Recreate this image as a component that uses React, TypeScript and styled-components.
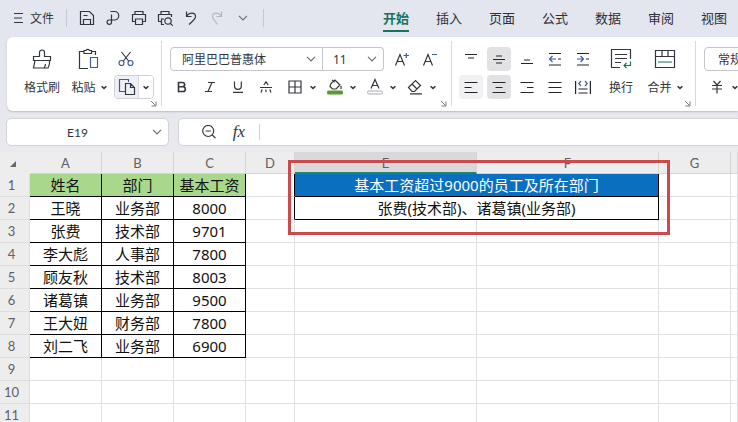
import React from "react";
import styled, { createGlobalStyle, css } from "styled-components";

const ink = "#33363d";
const blue = "#3f5c9a";
const green = "#17735c";

const GlobalStyle = createGlobalStyle`
  * { box-sizing: border-box; }
  body {
    margin: 0;
    font-family: "Noto Sans", "Noto Sans CJK SC", sans-serif;
    font-size: 12px;
    color: ${ink};
  }
  button, input, select { font: inherit; color: inherit; margin: 0; }
`;

const Window = styled.div`
  display: flex;
  flex-direction: column;
  height: 100vh;
  overflow: hidden;
  background: linear-gradient(#e3e5ef 0, #e4e6ef 60px, #e9e9ee 150px);
`;

const bare = css`
  border: 0;
  padding: 0;
  background: none;
  display: flex;
  align-items: center;
  justify-content: center;
`;

/* Menu bar */
const MenuBar = styled.header`
  display: flex;
  align-items: center;
  flex: none;
  height: 37px;
  padding: 0 11px 2px 14px;
`;
const FileButton = styled.button`
  ${bare}
  gap: 7px;
  margin-right: 12px;
  white-space: nowrap;
`;
const QuickButton = styled.button`
  ${bare}
  width: 26px;
  height: 26px;
  &:disabled { color: #b4b7c0; }
`;
const MenuRule = styled.span<{ $before?: number; $after?: number }>`
  width: 1px;
  height: 18px;
  margin: 0 ${(p) => p.$after ?? 0}px 0 ${(p) => p.$before ?? 0}px;
  background: #c6c9d3;
`;
const Tabs = styled.nav`
  display: flex;
  gap: 27px;
  margin-left: auto;
`;
const Tab = styled.a<{ $active?: boolean }>`
  font-size: 13px;
  line-height: 24px;
  white-space: nowrap;
  text-decoration: none;
  color: ${(p) => (p.$active ? green : "#2c2f36")};
  font-weight: ${(p) => (p.$active ? 700 : 400)};
  border-bottom: 2px solid ${(p) => (p.$active ? green : "transparent")};
  margin-top: 2px;
`;

/* Ribbon */
const Ribbon = styled.section`
  display: flex;
  flex: none;
  margin-left: 7px;
  padding: 4px 0 5px;
  overflow: hidden;
  background: #fff;
  border-radius: 6px 0 0 6px;
  box-shadow: 0 1px 2px #b9bac4;
`;
const Group = styled.div<{ $left: number; $right: number }>`
  position: relative;
  display: flex;
  flex: none;
  gap: 4px;
  padding: 6px ${(p) => p.$right}px 7px ${(p) => p.$left}px;
  border-right: 1px solid #d9dade;
`;
const Stack = styled.div`
  display: flex;
  flex-direction: column;
  gap: 4px;
`;
const Line = styled.div<{ $gap?: number }>`
  display: flex;
  align-items: center;
  height: 24px;
  gap: ${(p) => p.$gap ?? 0}px;
`;
const Pair = styled.div`
  display: flex;
`;
const BigButton = styled.button<{ $width: number }>`
  ${bare}
  flex-direction: column;
  gap: 4px;
  width: ${(p) => p.$width}px;
`;
const BigIcon = styled.span`
  display: flex;
  align-items: center;
  justify-content: center;
  height: 24px;
`;
const Caption = styled.span`
  display: flex;
  align-items: center;
  gap: 5px;
  height: 24px;
  white-space: nowrap;
`;
const Tool = styled.button<{ $width?: number; $tone?: string }>`
  ${bare}
  flex: none;
  width: ${(p) => p.$width ?? 24}px;
  height: 24px;
  border-radius: 4px;
  background: ${(p) => p.$tone ?? "none"};
`;
const Split = styled.div`
  display: flex;
  margin-right: 4px;
`;
const CopySplit = styled.div`
  display: flex;
  height: 24px;
  border: 1px solid #cfd1d6;
  border-radius: 4px;
  overflow: hidden;
`;
const CopyButton = styled.button<{ $width: number; $on?: boolean }>`
  ${bare}
  width: ${(p) => p.$width}px;
  background: ${(p) => (p.$on ? "#eef0f5" : "#fff")};
  border-right: ${(p) => (p.$on ? "1px solid #d9dbe0" : "0")};
`;
const Launcher = styled.button`
  ${bare}
  position: absolute;
  right: 3px;
  bottom: -2px;
  width: 9px;
  height: 9px;
`;
const PickerBox = styled.span<{ $width: number; $first?: boolean; $last?: boolean }>`
  display: flex;
  align-items: center;
  width: ${(p) => p.$width}px;
  height: 24px;
  padding-right: 6px;
  border: 1px solid #c4c6cc;
  border-left-width: ${(p) => (p.$first ? 1 : 0)}px;
  border-radius: ${(p) => (p.$first ? 4 : 0)}px ${(p) => (p.$last ? 4 : 0)}px ${(p) => (p.$last ? 4 : 0)}px ${(p) => (p.$first ? 4 : 0)}px;
`;
const Picker = styled.select<{ $indent: number }>`
  flex: 1;
  min-width: 0;
  height: 22px;
  padding: 0 0 0 ${(p) => p.$indent}px;
  border: 0;
  appearance: none;
  background: none;
`;

/* Formula row */
const FormulaRow = styled.div`
  display: flex;
  flex: none;
  gap: 9px;
  padding: 7px 0 6px 6px;
`;
const NameBox = styled.div`
  display: flex;
  align-items: center;
  width: 163px;
  height: 28px;
  padding-right: 6px;
  border: 1px solid #d2d3d9;
  border-radius: 5px;
  background: #fff;
`;
const NameInput = styled.input`
  flex: 1;
  min-width: 0;
  border: 0;
  padding: 0 4px 0 0;
  background: none;
  text-align: center;
  font-family: Lato, sans-serif;
  font-size: 12px;
`;
const FormulaBox = styled.div`
  display: flex;
  align-items: center;
  flex: 1;
  height: 28px;
  padding-left: 15px;
  border: 1px solid #d2d3d9;
  border-right: 0;
  border-radius: 5px 0 0 5px;
  background: #fff;
`;
const FormulaButton = styled.button`
  ${bare}
  width: 30px;
  height: 24px;
`;
const FxMark = styled.span`
  font: italic 17px/24px "Liberation Serif", serif;
`;
const FormulaInput = styled.input`
  flex: 1;
  min-width: 0;
  height: 16px;
  margin-left: 5px;
  border: 0;
  border-left: 1px solid #d0d1d6;
  background: none;
`;

/* Sheet */
const SheetArea = styled.main`
  position: relative;
  flex: none;
`;
const Sheet = styled.table`
  width: 100%;
  table-layout: fixed;
  border-collapse: separate;
  border-spacing: 0;
  background: #fff;
`;
const Col = styled.col<{ $width?: number }>`
  width: ${(p) => (p.$width ? `${p.$width}px` : "auto")};
`;
const headText = css`
  padding: 0;
  font-family: Lato, sans-serif;
  font-size: 13px;
  font-weight: 400;
  color: #606166;
`;
const ColHead = styled.th<{ $on?: boolean }>`
  ${headText}
  height: 22px;
  padding-top: ${(p) => (p.$on ? 2 : 1)}px;
  line-height: 18px;
  background: ${(p) => (p.$on ? "#d9d9dc" : "#ededee")};
  border-right: 1px solid #d6d6d8;
  border-bottom: ${(p) => (p.$on ? "2px solid #218567" : "1px solid #d6d6d8")};
`;
const Corner = styled.td`
  padding: 2px 0 0 9px;
  line-height: 0;
  background: #ededee;
`;
const RowHead = styled.th`
  ${headText}
  height: 23px;
  padding-right: 6px;
  background: #ededee;
  border-right: 1px solid #dededf;
  border-bottom: 1px solid #dededf;
`;
const fills = { plain: "#fff", head: "#a9d88c", title: "#0b6fc0" };
const Cell = styled.td<{ $boxed?: boolean; $edge?: boolean; $fill?: keyof typeof fills }>`
  height: 23px;
  padding: 0;
  overflow: hidden;
  text-align: center;
  white-space: nowrap;
  font-size: 15px;
  line-height: 22px;
  color: ${(p) => (p.$fill === "title" ? "#fff" : "#111")};
  background: ${(p) => fills[p.$fill ?? "plain"]};
  border-right: 1px solid ${(p) => (p.$boxed || p.$edge ? "#000" : "#e0e0e2")};
  border-bottom: 1px solid ${(p) => (p.$boxed ? "#000" : "#e0e0e2")};
`;
const Highlight = styled.div`
  position: absolute;
  left: 288px;
  top: 8px;
  width: 382px;
  height: 75px;
  border: 3px solid #cb4b4c;
  pointer-events: none;
`;

/* Icons */
const Svg = ({ w = 16, h = 16, children }: { w?: number; h?: number; children: React.ReactNode }) => (
  <svg width={w} height={h} viewBox={`0 0 ${w} ${h}`} fill="none" stroke="currentColor" strokeWidth="1.2" aria-hidden="true">
    {children}
  </svg>
);
const Chevron = () => (
  <Svg w={10} h={6}><path d="M1 .8 5 4.8 9 .8" stroke="#6d7077" /></Svg>
);
const SmallChevron = () => (
  <Svg w={6} h={5}><path d="M.6 1.2 3 3.4 5.4 1.2" strokeWidth="1.5" /></Svg>
);
const LauncherIcon = () => (
  <Svg w={7} h={7}><path d="M1 1 5.5 5.5M6 1.5V6H1.5" stroke="#777a80" strokeWidth="1" /></Svg>
);
const MenuIcon = () => (
  <Svg w={9} h={12}><path d="M0 1.5h9M0 6h8M0 10.5h9" /></Svg>
);
const SaveIcon = () => (
  <Svg><path d="M1.5 1.5h9l4 4v9h-13zM4.5 14.5V9.500h7v5M4.500 5.500h4" /></Svg>
);
const ExportIcon = () => (
  <Svg><path d="M5.500 1.500h4a4 4 0 0 1 0 8.500H4.200a2.200 2.200 0 1 0 2.300 2.200V4.500" /></Svg>
);
const PrintIcon = () => (
  <Svg><path d="M4 4.500v-3h8v3M4 11.500H1.500v-7h13v7H12M4.500 9h7v5.500h-7z" /></Svg>
);
const PreviewIcon = () => (
  <Svg><path d="M4 4.500v-3h8v3M4 11.500H1.500v-7h13V7M7 14.500H4.500V9H7" /><circle cx="11" cy="11" r="3.200" /><path d="m13.300 13.300 2.400 2.400" /></Svg>
);
const UndoIcon = () => (
  <Svg><path d="M3.500 1.500v5h5M3.500 6.500C6 2 12.500 2 12.500 6.500c0 3-3 4.500-6.500 8" /></Svg>
);
const RedoIcon = () => (
  <Svg><path d="M12.500 1.500v5h-5M12.500 6.500C10 2 3.500 2 3.500 6.500c0 3 3 4.500 5 8" /></Svg>
);
const BrushIcon = () => (
  <Svg w={20} h={22}><path d="M1.500 8.500h6V4.500a2.500 2.500 0 0 1 5 0v4h6v4h-17zM3 12.500 1.500 20h14.500c1.500-2.500 2-5 1.500-7.500M13.500 16c0 1.500-.5 3-1.500 4" /></Svg>
);
const PasteIcon = () => (
  <Svg w={22} h={22}><path d="M6 3.500H1.500v17H10M13 3.500h4.500V7M6 5.500v-3h2a2 2 0 0 1 3.500 0h2v3z" /><path d="M12.500 9.500h7v10h-7z" stroke={blue} /></Svg>
);
const CutIcon = () => (
  <Svg w={18} h={16}><path d="M4.500 1 12 10.500M13.500 1 6 10.500" /><circle cx="4.500" cy="12" r="2.500" stroke={blue} /><circle cx="13.500" cy="12" r="2.500" stroke={blue} /></Svg>
);
const CopyIcon = () => (
  <Svg w={18} h={18}><path d="M7 13.500H1.500v-12h9V4" stroke={blue} /><path d="M7.500 5.500h5l4 4v7h-9zM12.500 5.500v4h4" /></Svg>
);
const GrowIcon = () => (
  <Svg w={16} h={16}><path d="M1.500 14.500 6 3.500l4.500 11M3 10.500h6" /><path d="M9.500 4.500H15M12.300 2v5" stroke={blue} /></Svg>
);
const ShrinkIcon = () => (
  <Svg w={16} h={16}><path d="M1.500 14.500 6 3.500l4.500 11M3 10.500h6" /><path d="M10 3.500h5" stroke={blue} /></Svg>
);
const BoldIcon = () => (
  <Svg w={12} h={12}><path d="M2.500 1.500h4a2 2 0 0 1 0 4.300h-4zM2.500 5.800h4.500a2.300 2.300 0 0 1 0 4.700H2.500z" strokeWidth="1.600" /></Svg>
);
const ItalicIcon = () => (
  <Svg w={12} h={12}><path d="M4 1.500h7M1 10.500h7M8 1.500l-4 9" /></Svg>
);
const UnderlineIcon = () => (
  <Svg w={12} h={12}><path d="M2.500.5v4.500a3.300 3.300 0 0 0 6.800 0V.5M1 11.300h10" /></Svg>
);
const StrikeIcon = () => (
  <Svg w={14} h={12}><path d="M1 6.500h12M4.800 4 7 .8 9.200 4M3.200 8.500l-1.200 3M10.800 8.500l1.200 3M7 8.500V11" /></Svg>
);
const BorderIcon = () => (
  <Svg w={14} h={14}><path d="M1 1h12v12H1zM7 1v12M1 7h12" /></Svg>
);
const FillIcon = () => (
  <Svg w={16} h={18}><path d="M4 5.500 8 2l5 5-4 4H5.500L3 8.500zM5 2l3 2M14 8v3" /><rect x="0" y="12.500" width="16" height="4" rx="1.500" fill="#5b9b2d" stroke="none" /></Svg>
);
const FontColorIcon = () => (
  <Svg w={16} h={18}><path d="M4 10.500 8 1.500l4 9M5.500 7.500h5" /><rect x=".5" y="13" width="15" height="3" rx="1.500" stroke="#a9abb0" strokeWidth="1" /></Svg>
);
const EraserIcon = () => (
  <Svg w={16} h={16}><path d="M1.500 8.500 8.500 1.500l5 5-6 6H5zM5 5l5 5M3 14.800h12" /></Svg>
);
const Bars = ({ d, accent }: { d: string; accent?: string }) => (
  <Svg><path d={d} stroke="#22252b" />{accent && <path d={accent} stroke={blue} />}</Svg>
);
const WrapIcon = () => (
  <Svg w={22} h={22}><path d="M20.500 11V1.500h-19v18H10M5 6.500h12M5 10.500h12M5 14.500h6" /><path d="M20.500 13.500v4H14M16.500 15 14 17.500l2.500 2.500" stroke={green} /></Svg>
);
const MergeIcon = () => (
  <Svg w={22} h={20}><path d="M1.500 1.500h19v17h-19zM1.500 7.500h19M8 1.500v6M14 1.500v6" /><path d="M4 13h14" stroke={green} /></Svg>
);
const ZoomOutIcon = () => (
  <Svg w={16} h={16}><circle cx="7.200" cy="7" r="5.500" /><path d="M4.500 7h5.400M11.300 11l3.200 3.200" /></Svg>
);

const quick = [
  ["保存", SaveIcon], ["输出为PDF", ExportIcon], ["打印", PrintIcon], ["打印预览", PreviewIcon],
  ["撤销", UndoIcon], ["恢复", RedoIcon], ["更多", Chevron],
] as const;
const tabs = ["开始", "插入", "页面", "公式", "数据", "审阅", "视图"];
const styles = [["加粗", BoldIcon], ["倾斜", ItalicIcon], ["下划线", UnderlineIcon], ["删除线", StrikeIcon]] as const;
const splits = [["边框", BorderIcon], ["填充颜色", FillIcon], ["字体颜色", FontColorIcon], ["清除", EraserIcon]] as const;

type Align = { name: string; d: string; accent?: string; tone?: string };
const alignRows: Align[][] = [
  [
    { name: "顶端对齐", d: "M2 3.500h12M5 7h6" },
    { name: "垂直居中", d: "M5 5h6M2 8.500h12M5 12h6", tone: "#e2e2e4" },
    { name: "底端对齐", d: "M5 9h6M2 12.500h12" },
    { name: "减少缩进", d: "M2 2.500h12M2 14h12M11 8h3", accent: "M9 8H2.500M5.500 5l-3 3 3 3" },
    { name: "增加缩进", d: "M2 2.500h12M2 14h12M11 8h3", accent: "M2 8h6.500M5.500 5l3 3-3 3" },
  ],
  [
    { name: "左对齐", d: "M1.500 3.500h13M1.500 8.500h7M1.500 13.500h13", tone: "#f1f1f3" },
    { name: "水平居中", d: "M1.500 3.500h13M4.500 8.500h7M1.500 13.500h13", tone: "#e2e2e4" },
    { name: "右对齐", d: "M1.500 3.500h13M8 8.500h6.500M1.500 13.500h13" },
    { name: "两端对齐", d: "M1.500 3.500h13M1.500 8.500h13M1.500 13.500h13" },
    { name: "分散对齐", d: "M.6 2v13M15.400 2v13M3.500 10h9M3.500 14h9", accent: "M6 2 3.800 4.500 6 7M10 2l2.200 2.500L10 7" },
  ],
];

const rows = [
  ["姓名", "部门", "基本工资"], ["王晓", "业务部", "8000"], ["张费", "技术部", "9701"], ["李大彪", "人事部", "7800"],
  ["顾友秋", "技术部", "8003"], ["诸葛镇", "业务部", "9500"], ["王大妞", "财务部", "7800"], ["刘二飞", "业务部", "6900"],
  ["", "", ""], ["", "", ""], ["", "", ""],
];
const summary = ["基本工资超过9000的员工及所在部门", "张费(技术部)、诸葛镇(业务部)"];
const columns = ["A", "B", "C", "D", "E", "F", "G", ""];
const widths = [30, 72, 72, 72, 49, 182, 182, 72, undefined];

export default function App() {
  return (
    <Window>
      <GlobalStyle />
      <MenuBar>
        <FileButton><MenuIcon />文件</FileButton>
        <MenuRule $after={7} />
        {quick.map(([name, Icon]) => (
          <QuickButton key={name} aria-label={name} disabled={name === "恢复"}><Icon /></QuickButton>
        ))}
        <MenuRule $before={7} />
        <Tabs>
          {tabs.map((t, i) => <Tab key={t} href="#" $active={i === 0}>{t}</Tab>)}
        </Tabs>
      </MenuBar>

      <Ribbon>
        <Group $left={9} $right={7}>
          <Pair>
            <BigButton $width={52}><BigIcon><BrushIcon /></BigIcon><Caption>格式刷</Caption></BigButton>
            <BigButton $width={42}><BigIcon><PasteIcon /></BigIcon><Caption>粘贴<SmallChevron /></Caption></BigButton>
          </Pair>
          <Stack>
            <Line><Tool aria-label="剪切"><CutIcon /></Tool></Line>
            <CopySplit>
              <CopyButton $width={24} $on aria-label="复制"><CopyIcon /></CopyButton>
              <CopyButton $width={14} aria-label="复制选项"><SmallChevron /></CopyButton>
            </CopySplit>
          </Stack>
          <Launcher aria-label="剪贴板设置"><LauncherIcon /></Launcher>
        </Group>

        <Group $left={8} $right={7}>
          <Stack>
            <Line>
              <PickerBox $width={153} $first>
                <Picker $indent={11} aria-label="字体"><option>阿里巴巴普惠体</option></Picker>
                <Chevron />
              </PickerBox>
              <PickerBox $width={61} $last>
                <Picker $indent={10} aria-label="字号"><option>11</option></Picker>
                <Chevron />
              </PickerBox>
              <Split />
              <Tool $width={28} aria-label="增大字号"><GrowIcon /></Tool>
              <Tool $width={28} aria-label="减小字号"><ShrinkIcon /></Tool>
            </Line>
            <Line>
              <Line $gap={4}>
                {styles.map(([name, Icon]) => <Tool key={name} aria-label={name}><Icon /></Tool>)}
                <span />
              </Line>
              {splits.map(([name, Icon]) => (
                <Split key={name}>
                  <Tool $width={26} aria-label={name}><Icon /></Tool>
                  <Tool $width={10} aria-label={`${name}选项`}><SmallChevron /></Tool>
                </Split>
              ))}
            </Line>
          </Stack>
          <Launcher aria-label="字体设置"><LauncherIcon /></Launcher>
        </Group>

        <Group $left={7} $right={8}>
          <Stack>
            {alignRows.map((line, i) => (
              <Line key={i} $gap={4}>
                {line.map((a) => (
                  <Tool key={a.name} aria-label={a.name} $tone={a.tone}><Bars d={a.d} accent={a.accent} /></Tool>
                ))}
              </Line>
            ))}
          </Stack>
          <Pair>
            <BigButton $width={44}><BigIcon><WrapIcon /></BigIcon><Caption>换行</Caption></BigButton>
            <BigButton $width={44}><BigIcon><MergeIcon /></BigIcon><Caption>合并<SmallChevron /></Caption></BigButton>
          </Pair>
          <Launcher aria-label="对齐设置"><LauncherIcon /></Launcher>
        </Group>

        <Group $left={8} $right={8}>
          <Stack>
            <PickerBox $width={110} $first $last>
              <Picker $indent={13} aria-label="数字格式"><option>常规</option></Picker>
              <Chevron />
            </PickerBox>
            <Split>
              <Tool $width={26} aria-label="货币格式">
                <Svg w={12} h={14}><path d="M2.500 1 6 5l3.500-4M1 5.500h10M1 9h10M6 5v8.500" /></Svg>
              </Tool>
              <Tool $width={10} aria-label="货币选项"><SmallChevron /></Tool>
            </Split>
          </Stack>
        </Group>
      </Ribbon>

      <FormulaRow>
        <NameBox><NameInput aria-label="名称框" defaultValue="E19" /><Chevron /></NameBox>
        <FormulaBox>
          <FormulaButton aria-label="缩小"><ZoomOutIcon /></FormulaButton>
          <FormulaButton aria-label="插入函数"><FxMark>fx</FxMark></FormulaButton>
          <FormulaInput aria-label="编辑栏" />
        </FormulaBox>
      </FormulaRow>

      <SheetArea>
        <Sheet>
          <colgroup>{widths.map((w, i) => <Col key={i} $width={w} />)}</colgroup>
          <thead>
            <tr>
              <Corner><Svg w={8} h={8}><path d="M7 1v6H1z" fill="#66686d" stroke="none" /></Svg></Corner>
              {columns.map((c) => <ColHead key={c} scope="col" $on={c === "E"}>{c}</ColHead>)}
            </tr>
          </thead>
          <tbody>
            {rows.map((row, r) => (
              <tr key={r}>
                <RowHead scope="row">{r + 1}</RowHead>
                {row.map((v, c) => (
                  <Cell key={c} $boxed={r < 8} $fill={r === 0 ? "head" : "plain"}>{v}</Cell>
                ))}
                <Cell $edge={r < 2} />
                {r < 2 ? (
                  <Cell colSpan={2} $boxed $fill={r === 0 ? "title" : "plain"}>{summary[r]}</Cell>
                ) : (
                  <><Cell /><Cell /></>
                )}
                <Cell />
                <Cell />
              </tr>
            ))}
          </tbody>
        </Sheet>
        <Highlight />
      </SheetArea>
    </Window>
  );
}
